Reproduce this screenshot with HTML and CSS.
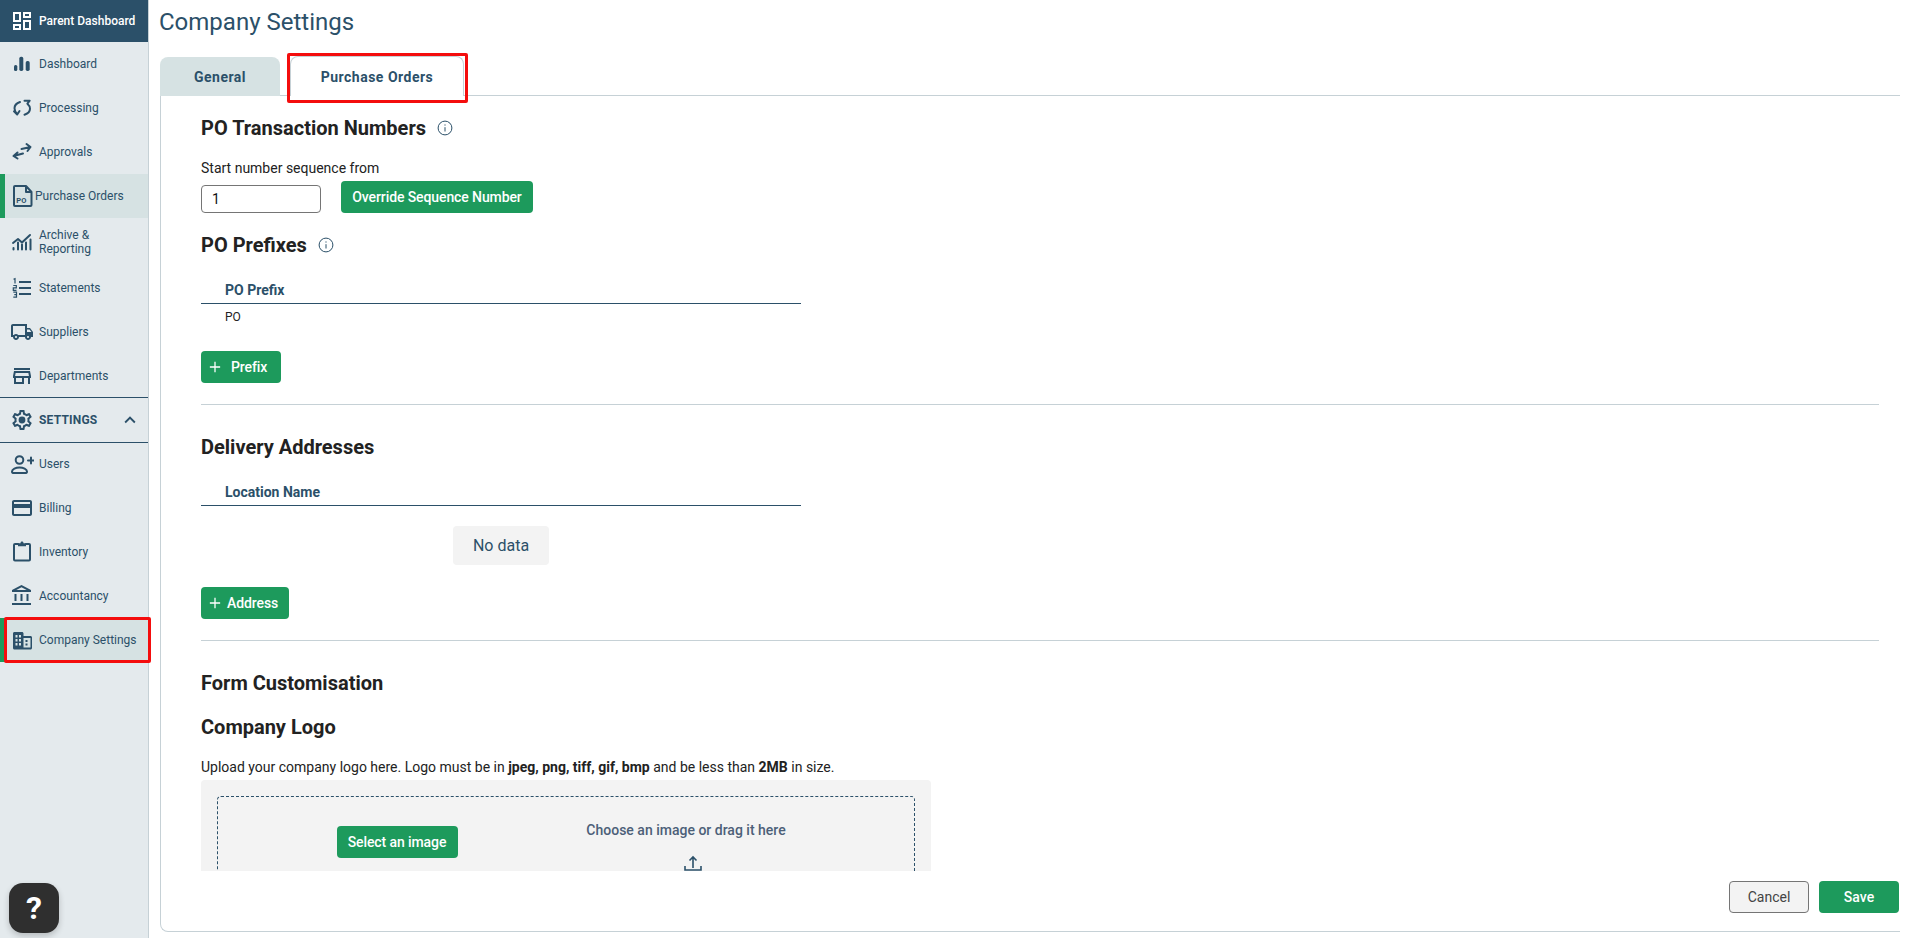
FILE: index.html
```html
<!DOCTYPE html>
<html lang="en">
<head>
<meta charset="utf-8">
<title>Company Settings</title>
<link rel="stylesheet" href="styles.css">
</head>
<body>
<div class="app">
  <aside class="sidebar">
    <a class="nav-head"><svg class="ico" viewBox="0 0 24 24"><path d="M19 5v2h-4V5h4M9 5v6H5V5h4m10 8v6h-4v-6h4M9 17v2H5v-2h4M21 3h-8v6h8V3zM11 3H3v10h8V3zm10 8h-8v10h8V11zm-10 4H3v6h8v-6z"/></svg><span>Parent Dashboard</span></a>
    <a class="nav"><svg class="ico" viewBox="0 0 24 24"><rect x="4" y="13" width="3.300" height="6" rx="1.500"/><rect x="9.300" y="4.700" width="4" height="14.300" rx="1.700"/><rect x="15.700" y="9" width="4" height="10" rx="1.700"/></svg><span>Dashboard</span></a>
    <a class="nav"><svg class="ico" viewBox="0 0 24 24"><path class="ln" d="M10 6C6.500 7.200 4.500 9.500 4.500 12.300c0 2 1 4 2.500 5.700M4 15.200l3.200 3.300 2.300-3.500M14.500 4.700h5.200l-2.300 3c1.700 1.500 2.600 3.200 2.600 5 0 2.500-2 4.800-5.500 6"/></svg><span>Processing</span></a>
    <a class="nav"><svg class="ico" viewBox="0 0 24 24"><path class="ln" d="M3.500 16l9.500-2.500M7.500 12.500l-4 3.500 4 2.500M11.500 9l9-2M16.500 4l4 3-3 4"/></svg><span>Approvals</span></a>
    <a class="nav active po"><svg class="ico" viewBox="0 0 24 24"><path class="ln" d="M4 2h11l5.500 6v13c0 .6-.4 1-1 1H4c-.6 0-1-.4-1-1V3c0-.6.4-1 1-1zM15 2v6h5.500"/><text x="5.300" y="18.500" class="po-text">PO</text></svg><span>Purchase Orders</span></a>
    <a class="nav tall"><svg class="ico" viewBox="0 0 24 24"><path class="ln" d="M3 13l5-4 4 3.500 8-7.500"/><path class="ln" d="M3.500 19.500v-1.500M8 19.500v-7M12 19.500v-5M16 19.500v-7M20.500 19.500v-10"/></svg><span class="wrap">Archive &amp; Reporting</span></a>
    <a class="nav"><svg class="ico" viewBox="0 0 24 24"><path class="num" d="M3.500 3.200L5 2.600v4.800M3.300 9.500h3v2.300h-3v2.600h3.200M3.300 16.200h3.200v5h-3.200M4.300 18.700h2.200"/><path d="M9 5h12v2H9zm0 6h12v2H9zm0 6h12v2H9z"/></svg><span>Statements</span></a>
    <a class="nav"><svg class="ico" viewBox="0 0 24 24"><path d="M20 8h-3V4H3c-1.100 0-2 .9-2 2v11h2c0 1.660 1.340 3 3 3s3-1.340 3-3h6c0 1.660 1.340 3 3 3s3-1.340 3-3h2v-5l-3-4zm-.5 1.500l1.960 2.500H17V9.500h2.500zM6 18c-.55 0-1-.45-1-1s.45-1 1-1 1 .45 1 1-.45 1-1 1zm2.220-3c-.55-.61-1.330-1-2.220-1s-1.670.39-2.220 1H3V6h12v9H8.220zM18 18c-.55 0-1-.45-1-1s.45-1 1-1 1 .45 1 1-.45 1-1 1z"/></svg><span>Suppliers</span></a>
    <a class="nav"><svg class="ico" viewBox="0 0 24 24"><path d="M20 4H4v2h16V4zm1 10v-2l-1-5H4l-1 5v2h1v6h10v-6h4v6h2v-6h1zm-9 4H6v-4h6v4zm-6.960-6l.6-3h12.720l.6 3H5.040z"/></svg><span>Departments</span></a>
    <a class="nav settings"><svg class="ico" viewBox="0 0 24 24"><path d="M19.430 12.980c.04-.32.07-.64.07-.98 0-.34-.03-.66-.07-.98l2.110-1.650c.19-.15.24-.42.12-.64l-2-3.460c-.09-.16-.26-.25-.44-.25-.06 0-.12.01-.17.03l-2.490 1c-.52-.4-1.080-.73-1.690-.98l-.38-2.650C14.460 2.180 14.250 2 14 2h-4c-.25 0-.46.18-.49.42l-.38 2.650c-.61.25-1.170.59-1.690.98l-2.490-1c-.06-.02-.12-.03-.18-.03-.17 0-.34.09-.43.25l-2 3.460c-.13.22-.07.49.12.64l2.110 1.650c-.04.32-.07.65-.07.98 0 .33.03.66.07.98l-2.110 1.650c-.19.15-.24.42-.12.64l2 3.460c.09.16.26.25.44.25.06 0 .12-.01.17-.03l2.490-1c.52.4 1.080.73 1.690.98l.38 2.650c.03.24.24.42.49.42h4c.25 0 .46-.18.49-.42l.38-2.650c.61-.25 1.170-.59 1.690-.98l2.490 1c.06.02.12.03.18.03.17 0 .34-.09.43-.25l2-3.460c.12-.22.07-.49-.12-.64l-2.110-1.650zm-1.980-1.710c.04.31.05.52.05.73 0 .21-.02.43-.05.73l-.14 1.130.89.7 1.080.84-.7 1.210-1.270-.51-1.040-.42-.9.68c-.43.32-.84.56-1.250.73l-1.060.43-.16 1.130-.2 1.350h-1.400l-.19-1.350-.16-1.130-1.060-.43c-.43-.18-.83-.41-1.230-.71l-.91-.7-1.060.43-1.270.51-.7-1.210 1.080-.84.89-.7-.14-1.130c-.03-.31-.05-.54-.05-.74s.02-.43.05-.73l.14-1.130-.89-.7-1.080-.84.7-1.210 1.270.51 1.040.42.9-.68c.43-.32.84-.56 1.250-.73l1.060-.43.16-1.130.2-1.350h1.390l.19 1.350.16 1.130 1.060.43c.43.18.83.41 1.230.71l.91.7 1.060-.43 1.270-.51.7 1.210-1.070.85-.89.7.14 1.130z"/><circle cx="12" cy="12" r="3.400"/></svg><span>SETTINGS</span><svg class="chev" viewBox="0 0 24 24"><path d="M12 8l-6 6 1.410 1.410L12 10.830l4.590 4.580L18 14z"/></svg></a>
    <a class="nav"><svg class="ico" viewBox="0 0 24 24"><circle class="ln" cx="9.500" cy="8" r="3.800"/><path class="ln" d="M4 21h11c1.200 0 2-.7 2-1.600 0-2.400-3.800-3.900-7.500-3.900S2 17 2 19.400C2 20.300 2.800 21 4 21zM18 8.500h6M21 5.500v6"/></svg><span>Users</span></a>
    <a class="nav"><svg class="ico" viewBox="0 0 24 24"><path d="M20 4H4c-1.110 0-1.990.89-1.990 2L2 18c0 1.110.89 2 2 2h16c1.110 0 2-.89 2-2V6c0-1.110-.89-2-2-2zm0 14H4v-6h16v6zm0-10H4V6h16v2z"/></svg><span>Billing</span></a>
    <a class="nav"><svg class="ico" viewBox="0 0 24 24"><path class="ln" d="M8 4H5c-.6 0-1 .4-1 1v14.500c0 .6.4 1 1 1h14c.6 0 1-.4 1-1V5c0-.6-.4-1-1-1h-3"/><path d="M8 3.200h2.500c0-1 .6-1.700 1.500-1.700s1.500.7 1.500 1.700H16V6.200H8z"/></svg><span>Inventory</span></a>
    <a class="nav"><svg class="ico" viewBox="0 0 24 24"><path d="M6.500 10h-2v7h2v-7zm6 0h-2v7h2v-7zm8.500 9H2v2h19v-2zm-2.500-9h-2v7h2v-7zm-7-6.740L16.710 6H6.290l5.210-2.740m0-2.260L2 6v2h19V6l-9.500-5z"/></svg><span>Accountancy</span></a>
    <a class="nav active"><svg class="ico" viewBox="0 0 24 24"><path fill-rule="evenodd" d="M3 5.500c0-.8.6-1.500 1.500-1.500H12c.8 0 1.500.7 1.500 1.500V8h7c.8 0 1.500.7 1.500 1.500V20c0 .8-.7 1.500-1.500 1.500h-16C3.600 21.500 3 20.800 3 20zM5.500 7v2.500h2V7zm3.500 0v2.500h2V7zM5.500 11v2.500h2V11zm3.500 0v2.500h2V11zM5.500 15v2.500h2V15zm3.500 0v2.500h2V15zm4.500-5v9.500h7V10zm2 2h2v2h-2zm0 3.500h2v2h-2z"/></svg><span>Company Settings</span></a>
    <button class="help" type="button">?</button>
  </aside>

  <main class="main">
    <h1 class="title">Company Settings</h1>
    <div class="tabs">
      <div class="tab">General</div>
      <div class="tab current">Purchase Orders</div>
    </div>
    <section class="panel">
      <div class="scroll">
        <div class="head-row first"><h2>PO Transaction Numbers</h2><svg class="info" viewBox="0 0 16 16"><circle cx="8" cy="8" r="6.900"/><path d="M8 7.200v4.300"/><path class="dot" d="M8 4.400v1.200"/></svg></div>
        <p class="label">Start number sequence from</p>
        <div class="seq">
          <div class="input">1</div>
          <button class="btn" type="button">Override Sequence Number</button>
        </div>
        <div class="head-row prefixes"><h2>PO Prefixes</h2><svg class="info" viewBox="0 0 16 16"><circle cx="8" cy="8" r="6.900"/><path d="M8 7.200v4.300"/><path class="dot" d="M8 4.400v1.200"/></svg></div>
        <div class="thead">PO Prefix</div>
        <div class="tcell">PO</div>
        <button class="btn add prefix" type="button"><svg class="plus" viewBox="0 0 14 14"><path d="M7 1v12M1 7h12"/></svg><span>Prefix</span></button>
        <hr class="divider">
        <div class="head-row delivery"><h2>Delivery Addresses</h2></div>
        <div class="thead">Location Name</div>
        <div class="nodata-row"><div class="nodata">No data</div></div>
        <button class="btn add address" type="button"><svg class="plus" viewBox="0 0 14 14"><path d="M7 1v12M1 7h12"/></svg><span>Address</span></button>
        <hr class="divider">
        <div class="head-row form"><h2>Form Customisation</h2></div>
        <div class="head-row logo"><h2>Company Logo</h2></div>
        <p class="upload-text">Upload your company logo here. Logo must be in <b>jpeg, png, tiff, gif, bmp</b> and be less than <b>2MB</b> in size.</p>
        <div class="dropzone">
          <div class="dashed">
            <div class="drop-left"><button class="btn select" type="button">Select an image</button></div>
            <div class="drop-right">
              <div class="choose">Choose an image or drag it here</div>
              <svg class="upload" viewBox="0 0 20 20"><path d="M2 11v4h16v-4M10 13V2M6.500 5.500L10 2l3.500 3.500"/></svg>
            </div>
          </div>
        </div>
      </div>
      <div class="actions">
        <button class="btn cancel" type="button">Cancel</button>
        <button class="btn save" type="button">Save</button>
      </div>
    </section>
  </main>
  <div class="mark mark-nav"></div>
  <div class="mark mark-tab"></div>
</div>
</body>
</html>
```
FILE: styles.css
```css
* { box-sizing: border-box; }
html, body { margin: 0; height: 100%; }
body {
  font-family: Roboto, "Liberation Sans", sans-serif;
  color: #222;
  background: #fff;
  overflow: hidden;
}
.app { position: relative; display: flex; height: 938px; }

/* Sidebar */
.sidebar {
  position: relative;
  flex: 0 0 149px;
  background: #e4eaed;
  border-right: 1px solid #c6d1d6;
  color: #2b5069;
}
.nav-head, .nav {
  display: flex;
  align-items: center;
  height: 44px;
  padding-left: 10px;
  font-size: 12px;
  line-height: 14px;
}
.nav-head { height: 42px; background: #2b5069; color: #fff; font-weight: 500; }
.nav-head .ico { fill: #fff; }
.ico { flex: 0 0 24px; width: 24px; height: 24px; margin-right: 5px; fill: #2b5069; }
.ln { fill: none; stroke: #2b5069; stroke-width: 2; stroke-linecap: round; stroke-linejoin: round; }
.num { fill: none; stroke: #2b5069; stroke-width: 1.2; }
.tall { height: 48px; }
.wrap { width: 60px; }
.active { background: #d6e2e3; border-left: 5px solid #1d9a5c; padding-left: 5px; }
.po { height: 44px; padding-left: 6px; }
.po .ico { margin-right: 0; }
.po-text { font-size: 7.5px; font-weight: 700; fill: #2b5069; }
.settings {
  height: 46px;
  margin: -1px 0;
  border-top: 1px solid #2b5069;
  border-bottom: 1px solid #2b5069;
  font-weight: 700;
  letter-spacing: .2px;
}
.settings span { flex: 1; }
.chev { width: 22px; height: 22px; margin-right: 7px; fill: #2b5069; }
.help {
  position: absolute;
  left: 9px;
  bottom: 5px;
  width: 50px;
  height: 50px;
  border: 0;
  border-radius: 14px;
  background: #2f2f2f;
  color: #fff;
  font: 700 32px/50px Roboto, sans-serif;
  box-shadow: 0 3px 6px rgba(0,0,0,.2);
  padding: 0;
}

/* Main */
.main { flex: 1; min-width: 0; padding: 0 13px 6px 11px; display: flex; flex-direction: column; }
.title { margin: 6px 0 0 -1px; height: 33px; font-size: 24px; line-height: 33px; font-weight: 400; color: #2b5069; }
.tabs { display: flex; gap: 10px; height: 39px; margin-top: 18px; margin-bottom: -1px; position: relative; z-index: 1; }
.tab {
  width: 120px;
  height: 39px;
  background: #d6e2e3;
  border-radius: 8px 8px 0 0;
  font-size: 14px;
  font-weight: 700;
  line-height: 40px;
  text-align: center;
  color: #2b5069;
  letter-spacing: .5px;
}
.tab.current {
  width: 174px;
  height: 40px;
  margin-top: -1px;
  background: #fff;
  border: 1px solid #c6d1d6;
  border-bottom: 0;
}
.panel {
  flex: 1;
  border: 1px solid #c6d1d6;
  border-radius: 0 0 0 8px;
  border-right: 0;
  display: flex;
  flex-direction: column;
  min-height: 0;
  padding: 0 0 18px 40px;
}
.scroll { height: 775px; overflow: hidden; padding-right: 21px; }
.head-row { display: flex; align-items: center; gap: 11px; height: 24px; }
.head-row h2 { margin: 0; font-size: 20px; line-height: 24px; font-weight: 700; color: #222; }
.first { margin-top: 20px; }
.prefixes { margin-top: 20px; }
.delivery { margin-top: 30px; }
.form { margin-top: 30px; }
.logo { margin-top: 20px; }
.info { width: 16px; height: 16px; fill: none; stroke: #2b5069; stroke-width: 1; }
.info .dot { stroke-width: 1.2; }
.label { margin: 20px 0 0; font-size: 14px; line-height: 16px; color: #222; }
.seq { display: flex; gap: 20px; align-items: flex-start; margin-top: 5px; }
.input {
  width: 120px;
  height: 28px;
  margin-top: 4px;
  border: 1px solid #757575;
  border-radius: 4px;
  background: #fff;
  padding-left: 10px;
  font-size: 14px;
  line-height: 26px;
  color: #111;
}
.btn {
  display: inline-flex;
  align-items: center;
  justify-content: center;
  height: 32px;
  border: 0;
  border-radius: 4px;
  background: #1d9a5c;
  color: #fff;
  font: 500 14px/16px Roboto, sans-serif;
  letter-spacing: -.1px;
  padding: 0;
}
.seq .btn { width: 192px; }
.thead {
  width: 600px;
  height: 27px;
  margin-top: 20px;
  padding-left: 24px;
  border-bottom: 1px solid #2b5069;
  font-size: 14px;
  font-weight: 700;
  line-height: 26px;
  color: #2b5069;
}
.tcell { padding-left: 24px; height: 28px; font-size: 12px; line-height: 26px; color: #222; }
.add { display: flex; margin-top: 19px; justify-content: flex-start; padding-left: 8px; }
.prefix { width: 80px; margin-top: 19px; }
.prefix .plus { margin-right: 10px; }
.address { width: 88px; margin-top: 22px; }
.address .plus { margin-right: 6px; }
.plus { width: 12px; height: 12px; fill: none; stroke: #fff; stroke-width: 1.5; }
.divider { height: 1px; border: 0; margin: 21px 0 0; background: #c6d1d6; }
.nodata-row { width: 600px; display: flex; justify-content: center; margin-top: 20px; }
.nodata { width: 96px; height: 39px; border-radius: 4px; background: #f3f3f3; text-align: center; font-size: 16px; line-height: 39px; color: #2b5069; }
.upload-text { margin: 20px 0 0; font-size: 14px; line-height: 16px; color: #222; }
.dropzone { width: 730px; height: 200px; margin-top: 5px; padding: 16px; background: #f3f3f3; border-radius: 4px; }
.dashed { display: flex; height: 170px; border: 1px dashed #2b5069; border-radius: 4px; }
.drop-left { width: 358px; display: flex; justify-content: center; padding-top: 29px; }
.select { width: 121px; }
.drop-right { flex: 1; display: flex; flex-direction: column; align-items: center; padding: 25px 118px 0 0; }
.choose { font-size: 14px; font-weight: 500; line-height: 16px; color: #4c5f78; }
.upload { width: 20px; height: 20px; margin: 17px 0 0 14px; flex: none; fill: none; stroke: #2b5069; stroke-width: 1.6; }
.actions { display: flex; justify-content: flex-end; gap: 10px; padding-right: 1px; margin-top: 10px; }
.cancel { width: 80px; background: #f3f3f3; border: 1px solid #757575; color: #444; font-weight: 400; letter-spacing: 0; }
.save { width: 80px; letter-spacing: 0; }

/* Red annotation boxes drawn over the screenshot */
.mark { position: absolute; border: 3px solid #f40d0d; border-radius: 2px; pointer-events: none; }
.mark-nav { left: 4px; top: 617px; width: 147px; height: 46px; }
.mark-tab { left: 287px; top: 53px; width: 181px; height: 50px; }
```
